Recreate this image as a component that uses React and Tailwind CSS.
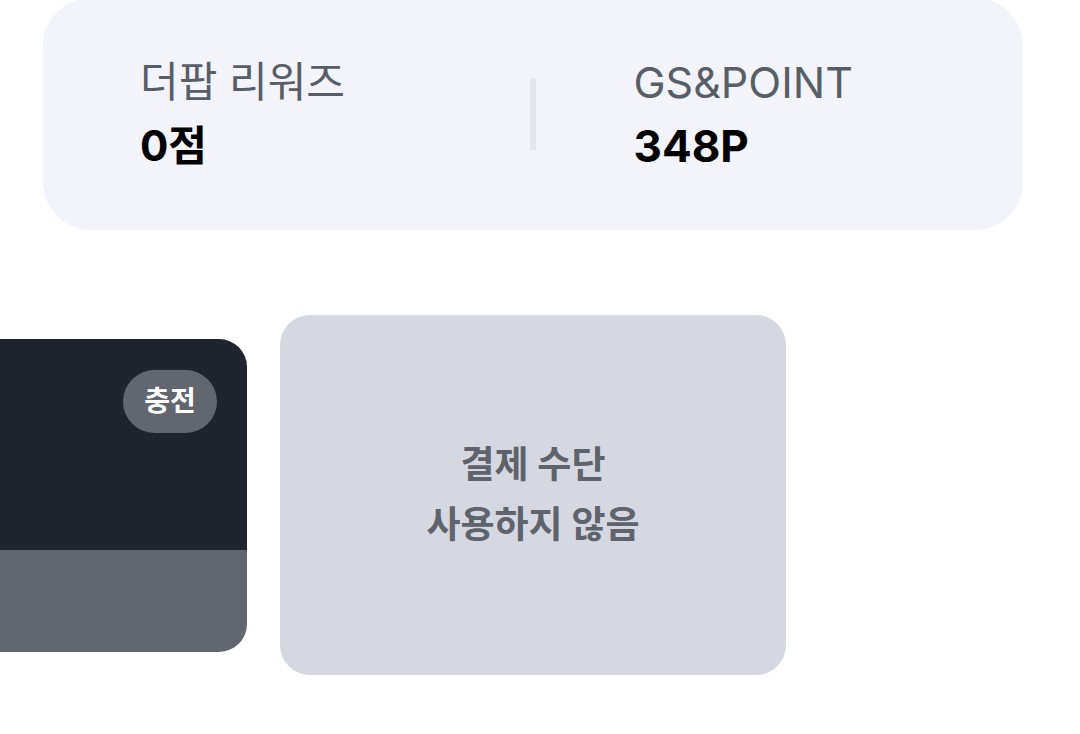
export default function App() {
  return (
    <div className="min-h-[734px] w-[1080px] overflow-hidden bg-white font-['Inter','Noto_Sans_CJK_KR',sans-serif]">
      {/* Point summary */}
      <div className="-mt-[2px] ml-[43px] flex h-[232px] w-[980px] items-center rounded-[48px] bg-[#f3f4f9]">
        <div className="flex-1 pl-[97px]">
          <p className="text-[42px] leading-[64px] text-[#585e67]">더팝 리워즈</p>
          <p className="text-[42px] font-bold leading-[64px] text-black">0점</p>
        </div>
        <div className="h-[72px] w-[6px] bg-[#e4e6ed]"></div>
        <div className="flex-1 pl-[98px]">
          <p className="text-[43px] leading-[64px] text-[#585e67]">GS&amp;POINT</p>
          <p className="text-[44px] font-bold leading-[64px] text-black">348P</p>
        </div>
      </div>

      {/* Payment carousel */}
      <div className="mt-[85px] flex items-center gap-[33px]">
        <div className="-ml-[193px] flex h-[313px] w-[440px] shrink-0 flex-col overflow-hidden rounded-[28px]">
          <div className="flex h-[211px] items-start justify-end bg-[#1f242e] pr-[30px] pt-[31px]">
            <span className="flex h-[63px] w-[94px] items-center justify-center rounded-full bg-[#62666e] text-[28px] font-semibold text-white">
              충전
            </span>
          </div>
          <div className="flex-1 bg-[#62666e]"></div>
        </div>
        <div className="flex h-[360px] w-[506px] shrink-0 flex-col items-center justify-center rounded-[30px] bg-[#d5d8e0] text-center">
          <p className="text-[37px] font-bold leading-[60px] text-[#5f636b]">결제 수단</p>
          <p className="text-[37px] font-bold leading-[60px] text-[#5f636b]">사용하지 않음</p>
        </div>
      </div>
    </div>
  );
}
